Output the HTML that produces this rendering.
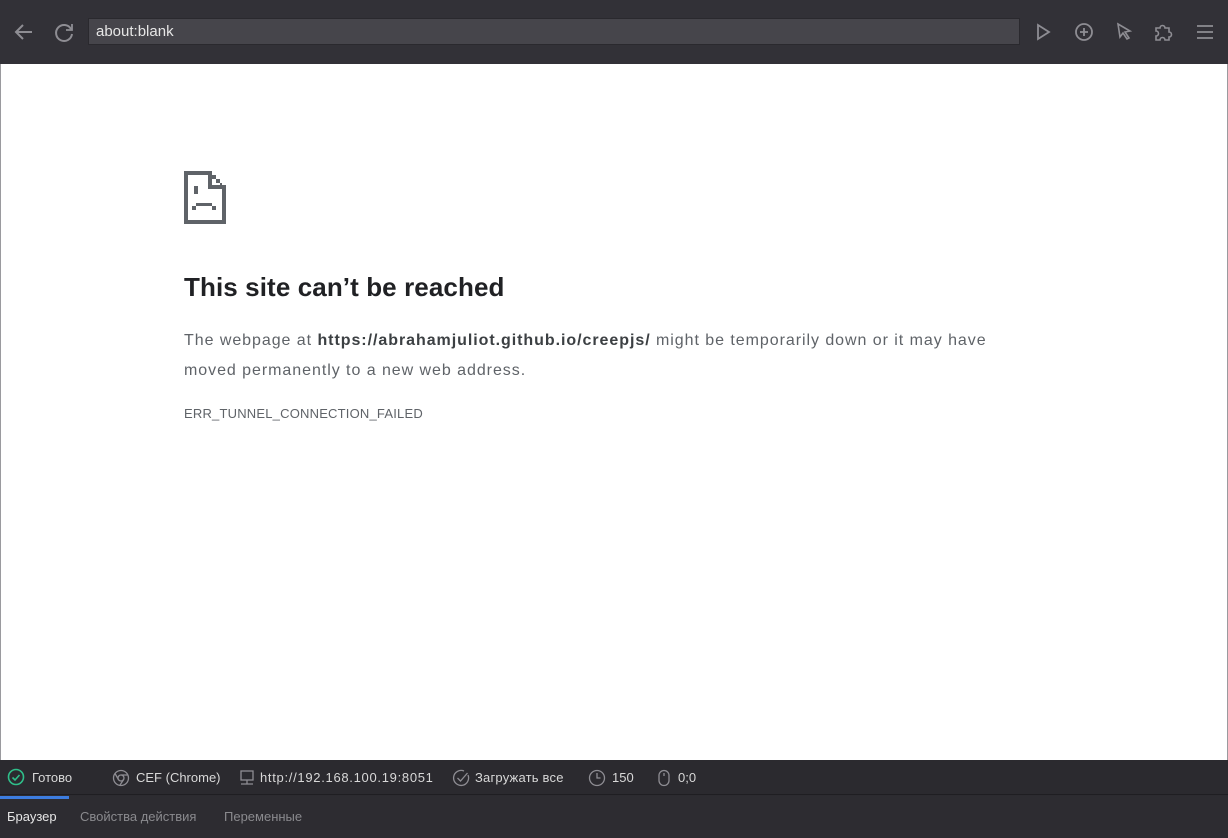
<!DOCTYPE html>
<html><head><meta charset="utf-8"><style>
*{margin:0;padding:0;box-sizing:border-box}
body{width:1228px;height:838px;background:#2c2b30;font-family:"Liberation Sans",sans-serif;position:relative;overflow:hidden}
.top{position:absolute;left:0;top:0;width:1228px;height:64px;background:#323137}
.url{position:absolute;left:88px;top:18px;width:932px;height:27px;background:#46454b;border:1px solid #2a292e;color:#e6e6e6;font-size:15px;line-height:25px;padding-left:7px}
.page{position:absolute;left:0;top:64px;width:1228px;height:696px;background:#fff;border-left:1px solid #9a9a9e;border-right:1px solid #9a9a9e}
h1{position:absolute;left:184px;top:272px;font-size:26px;font-weight:bold;color:#202124;letter-spacing:0.1px}
.p{position:absolute;left:184px;top:326px;width:850px;font-size:16px;line-height:30px;color:#5f6368;letter-spacing:0.95px}
.p b{color:#3c4043;letter-spacing:0.95px}
.err{position:absolute;left:184px;top:406px;font-size:13px;color:#5f6368;letter-spacing:0.2px}
.status{position:absolute;left:0;top:760px;width:1228px;height:35px;background:#2b2a2f;border-bottom:1px solid #1f1e22;color:#d8d8d8;font-size:13px}
.status span{position:absolute;top:10px}
.tabs{position:absolute;left:0;top:796px;width:1228px;height:42px;background:#2d2c31;font-size:13px;color:#8a8a8e}
.tabs span{position:absolute;top:13px}
svg{position:absolute}
</style></head><body>
<div class="top">
<svg style="left:12px;top:20px" width="24" height="24" viewBox="0 0 24 24" fill="none" stroke="#8e8d93" stroke-width="2"><path d="M20 12H4M11 5l-7 7 7 7"/></svg>
<svg style="left:52px;top:20px" width="24" height="24" viewBox="0 0 24 24" fill="none" stroke="#8e8d93" stroke-width="2"><path d="M19 9A8 8 0 1 0 20 14"/><path d="M20 4v6h-6" stroke-width="1.8"/></svg>
<div class="url">about:blank</div>
<svg style="left:1034px;top:22px" width="20" height="20" viewBox="0 0 20 20" fill="none" stroke="#8e8d93" stroke-width="1.8"><path d="M4 3l11 7-11 7z"/></svg>
<svg style="left:1073px;top:21px" width="22" height="22" viewBox="0 0 22 22" fill="none" stroke="#8e8d93" stroke-width="1.8"><circle cx="11" cy="11" r="8"/><path d="M11 7v8M7 11h8"/></svg>
<svg style="left:1114px;top:21px" width="22" height="22" viewBox="0 0 22 22" fill="none" stroke="#8e8d93" stroke-width="1.6"><path d="M4 3l12 7-5 1 4 6-2 1-4-6-3 4z"/></svg>
<svg style="left:1152px;top:21px" width="22" height="22" viewBox="0 0 22 22" fill="none" stroke="#8e8d93" stroke-width="1.6"><path d="M4 7h4a2.5 2.5 0 1 1 5 0h4v4a2.5 2.5 0 1 1 0 5v3h-4a2.5 2.5 0 1 0-5 0H4v-4a2.5 2.5 0 1 0 0-5z"/></svg>
<svg style="left:1194px;top:21px" width="22" height="22" viewBox="0 0 22 22" fill="none" stroke="#8e8d93" stroke-width="1.8"><path d="M3 5h16M3 11h16M3 17h16"/></svg>
</div>
<div class="page"></div>
<svg style="left:184px;top:171px" width="42" height="53" viewBox="0 0 42 53" fill="#5f6368">
<rect x="0" y="0" width="28" height="4"/><rect x="0" y="0" width="4" height="53"/><rect x="0" y="49" width="42" height="4"/><rect x="38" y="14" width="4" height="39"/>
<rect x="24" y="0" width="4" height="18"/><rect x="24" y="14" width="18" height="4"/><rect x="28" y="4" width="4" height="4"/><rect x="32" y="8" width="4" height="4"/><rect x="36" y="12" width="2" height="2"/>
<rect x="10" y="15" width="4" height="8"/><rect x="12" y="32" width="16" height="3"/><rect x="8" y="35" width="4" height="4"/><rect x="28" y="35" width="4" height="4"/></svg>
<h1>This site can’t be reached</h1>
<div class="p">The webpage at <b>https://abrahamjuliot.github.io/creepjs/</b> might be temporarily down or it may have moved permanently to a new web address.</div>
<div class="err">ERR_TUNNEL_CONNECTION_FAILED</div>
<div class="status">
<svg style="left:7px;top:8px" width="18" height="18" viewBox="0 0 18 18" fill="none" stroke="#2fbf8a" stroke-width="1.6"><circle cx="9" cy="9" r="7.5"/><path d="M5.5 9.5l2.5 2.5 4.5-5"/></svg>
<span style="left:32px">Готово</span>
<svg style="left:112px;top:9px" width="18" height="18" viewBox="0 0 18 18" fill="none" stroke="#8e8d93" stroke-width="1.3"><circle cx="9" cy="9" r="7.5"/><circle cx="9" cy="9" r="3"/><path d="M9 6h7M6.4 10.5L3 4.5M11.6 10.5L8 16"/></svg>
<span style="left:136px">CEF (Chrome)</span>
<svg style="left:238px;top:9px" width="18" height="18" viewBox="0 0 18 18" fill="none" stroke="#8e8d93" stroke-width="1.3"><rect x="3" y="2" width="12" height="9"/><path d="M9 11v4M3 15h12"/></svg>
<span style="left:260px;letter-spacing:0.7px">http://192.168.100.19:8051</span>
<svg style="left:452px;top:9px" width="18" height="18" viewBox="0 0 18 18" fill="none" stroke="#8e8d93" stroke-width="1.3"><path d="M16 6A7.5 7.5 0 1 1 12 2"/><path d="M5.5 9l3 3 7-8"/></svg>
<span style="left:475px;letter-spacing:0.2px">Загружать все</span>
<svg style="left:588px;top:9px" width="18" height="18" viewBox="0 0 18 18" fill="none" stroke="#8e8d93" stroke-width="1.3"><circle cx="9" cy="9" r="7.5"/><path d="M9 4v5h3.5"/></svg>
<span style="left:612px">150</span>
<svg style="left:657px;top:9px" width="14" height="18" viewBox="0 0 14 18" fill="none" stroke="#8e8d93" stroke-width="1.3"><rect x="2" y="1.5" width="10" height="15" rx="5"/><path d="M7 4v3"/></svg>
<span style="left:678px">0;0</span>
</div>
<div style="position:absolute;left:0;top:796px;width:69px;height:3px;background:#3d7de0;z-index:2"></div>
<div class="tabs">
<span style="left:7px;color:#e6e6e6">Браузер</span>
<span style="left:80px">Свойства действия</span>
<span style="left:224px">Переменные</span>
</div>
</body></html>
